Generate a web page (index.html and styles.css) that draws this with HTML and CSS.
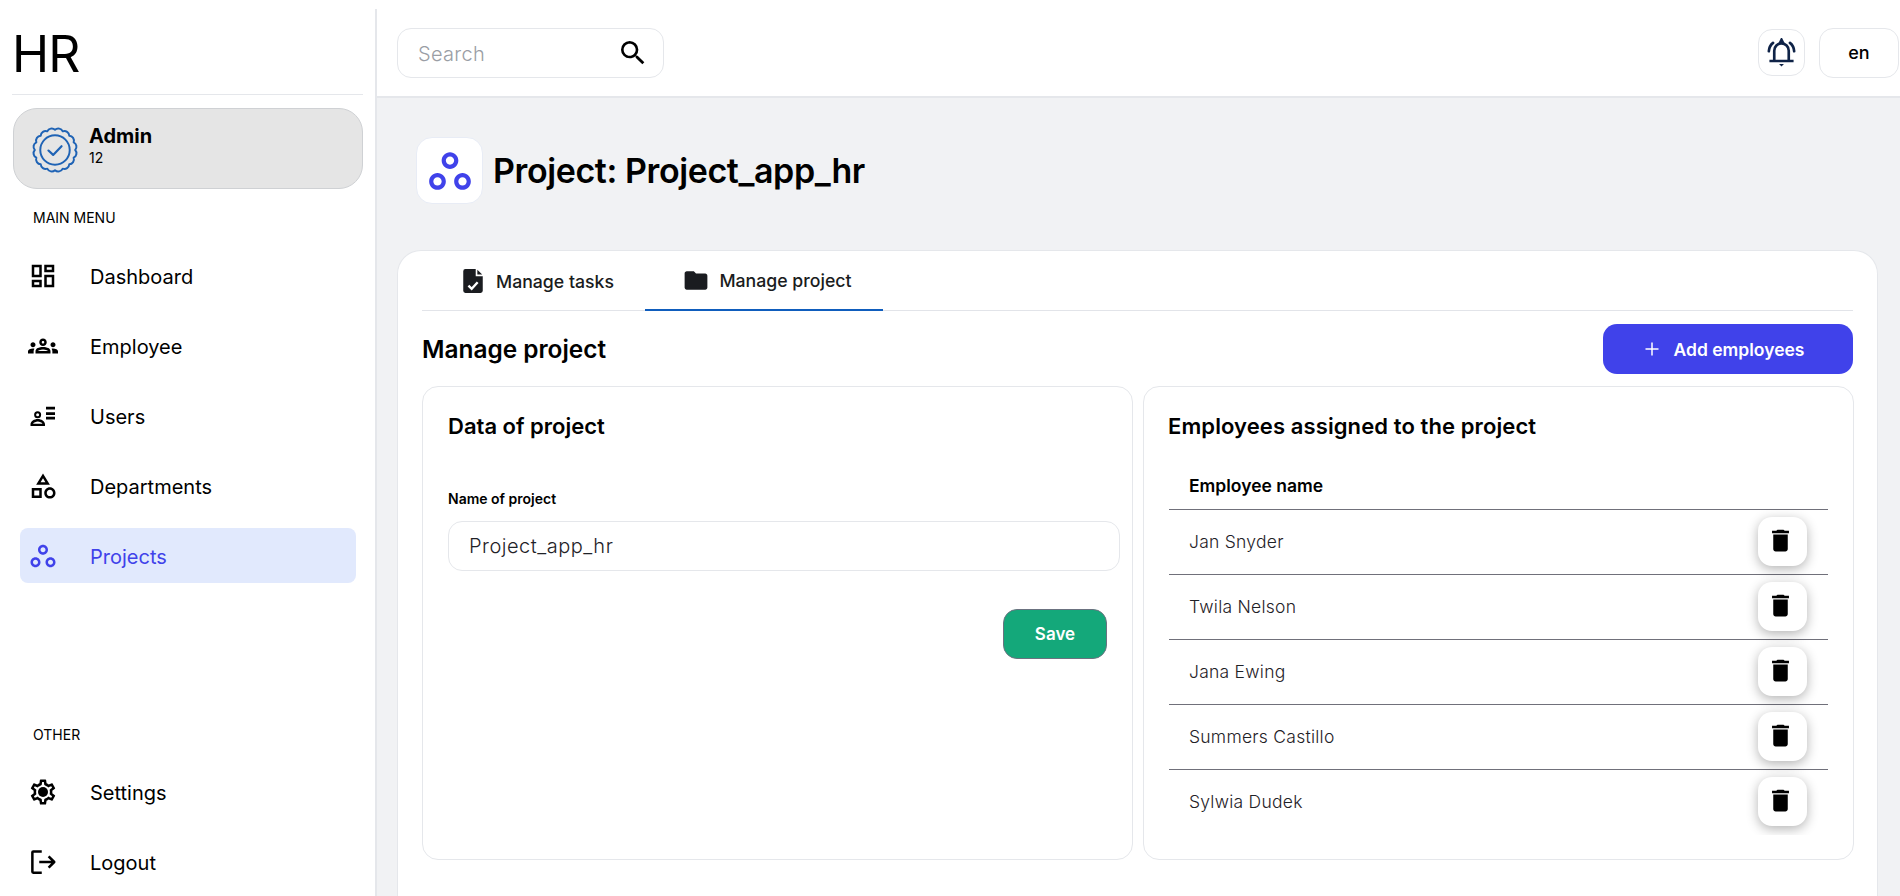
FILE: index.html
```html
<!DOCTYPE html>
<html lang="en">
<head>
<meta charset="utf-8">
<title>HR</title>
<link rel="stylesheet" href="styles.css">
</head>
<body>
<div class="app">
  <aside class="sidebar">
    <div class="brand">HR</div>
    <div class="profile">
      <svg class="badge" viewBox="0 0 44 44" fill="none" stroke="#1f63b5" stroke-width="1.8" stroke-linecap="round" stroke-linejoin="round">
        <path d="M40.5 22A4.5 4.5 0 0 1 39.1 29.08A4.5 4.5 0 0 1 35.08 35.08A4.5 4.5 0 0 1 29.08 39.1A4.5 4.5 0 0 1 22 40.5A4.5 4.5 0 0 1 14.92 39.1A4.5 4.5 0 0 1 8.92 35.08A4.5 4.5 0 0 1 4.9 29.08A4.5 4.5 0 0 1 3.5 22A4.5 4.5 0 0 1 4.9 14.92A4.5 4.5 0 0 1 8.92 8.92A4.5 4.5 0 0 1 14.92 4.9A4.5 4.5 0 0 1 22 3.5A4.5 4.5 0 0 1 29.08 4.9A4.5 4.5 0 0 1 35.08 8.92A4.5 4.5 0 0 1 39.1 14.92A4.5 4.5 0 0 1 40.5 22Z"/>
        <circle cx="22" cy="22" r="13.5"/>
        <path d="M16 22.5l4.3 4 7.7-8" stroke-width="2"/>
      </svg>
      <div class="profile-text">
        <div class="profile-name">Admin</div>
        <div class="profile-id">12</div>
      </div>
    </div>
    <div class="menu-label">MAIN MENU</div>
    <nav class="menu">
      <a class="menu-item">
        <svg class="menu-icon" viewBox="0 0 24 24"><path d="M19 5v2h-4V5h4M9 5v6H5V5h4m10 8v6h-4v-6h4M9 17v2H5v-2h4M21 3h-8v6h8V3zM11 3H3v10h8V3zm10 8h-8v10h8V11zm-10 4H3v6h8v-6z"/></svg>
        <span>Dashboard</span>
      </a>
      <a class="menu-item">
        <svg class="menu-icon" viewBox="0 0 24 24"><path d="M4 13c1.1 0 2-.9 2-2s-.9-2-2-2-2 .9-2 2 .9 2 2 2zm1.13 1.1C4.76 14.04 4.39 14 4 14c-.99 0-1.93.21-2.78.58C.48 14.9 0 15.62 0 16.43V18h4.5v-1.61c0-.83.23-1.61.63-2.29zM20 13c1.1 0 2-.9 2-2s-.9-2-2-2-2 .9-2 2 .9 2 2 2zm4 3.43c0-.81-.48-1.53-1.22-1.85C21.93 14.21 20.99 14 20 14c-.39 0-.76.04-1.13.1.4.68.63 1.46.63 2.29V18H24v-1.57zm-7.76-2.78c-1.17-.52-2.61-.9-4.24-.9s-3.07.39-4.24.9C6.68 14.13 6 15.21 6 16.39V18h12v-1.61c0-1.18-.68-2.26-1.76-2.74zM8.07 16c.09-.23.13-.39.91-.69.97-.38 1.99-.56 3.02-.56s2.05.18 3.02.56c.77.3.81.46.91.69H8.07zM12 8c.55 0 1 .45 1 1s-.45 1-1 1-1-.45-1-1 .45-1 1-1m0-2c-1.66 0-3 1.34-3 3s1.34 3 3 3 3-1.34 3-3-1.34-3-3-3z"/></svg>
        <span>Employee</span>
      </a>
      <a class="menu-item">
        <svg class="menu-icon" viewBox="0 0 24 24"><path d="M14.400 4.500h7.200v2.200h-7.200zM14.400 8.900h7.200v2.200h-7.200zM14.400 12.500h7.200v2.200h-7.200z"/><path fill-rule="evenodd" d="M7.700 8.200a2.800 2.800 0 1 0 0 5.600 2.800 2.800 0 0 0 0-5.600zm0 1.600a1.200 1.200 0 1 1 0 2.400 1.200 1.200 0 0 1 0-2.400zM2 20v-1.400c0-2.400 3-4.200 5.800-4.200s5.800 1.800 5.800 4.200V20zm2-1.800h7.600c-.6-1-2.400-1.800-3.800-1.800s-3.200.8-3.800 1.800z"/></svg>
        <span>Users</span>
      </a>
      <a class="menu-item">
        <svg class="menu-icon" viewBox="0 0 24 24"><path d="M12 2l-5.500 9h11L12 2zm0 3.840L13.930 9h-3.870L12 5.840zM17.500 13c-2.490 0-4.500 2.010-4.500 4.500s2.010 4.500 4.500 4.500 4.500-2.010 4.500-4.500-2.010-4.500-4.500-4.500zm0 7c-1.380 0-2.500-1.120-2.500-2.500s1.120-2.500 2.500-2.500 2.500 1.120 2.500 2.500-1.120 2.500-2.500 2.500zM3 21.500h8v-8H3v8zm2-6h4v4H5v-4z"/></svg>
        <span>Departments</span>
      </a>
      <a class="menu-item active">
        <svg class="menu-icon" viewBox="0 0 24 24"><path d="M6 13c-2.200 0-4 1.800-4 4s1.800 4 4 4 4-1.800 4-4-1.800-4-4-4zm0 6c-1.100 0-2-.9-2-2s.9-2 2-2 2 .9 2 2-.9 2-2 2zm6-16C9.800 3 8 4.800 8 7s1.800 4 4 4 4-1.800 4-4-1.800-4-4-4zm0 6c-1.100 0-2-.9-2-2s.9-2 2-2 2 .9 2 2-.9 2-2 2zm6 4c-2.200 0-4 1.800-4 4s1.800 4 4 4 4-1.800 4-4-1.800-4-4-4zm0 6c-1.100 0-2-.9-2-2s.9-2 2-2 2 .9 2 2-.9 2-2 2z"/></svg>
        <span>Projects</span>
      </a>
    </nav>
    <div class="menu-bottom">
      <div class="menu-label">OTHER</div>
      <nav class="menu">
        <a class="menu-item">
          <svg class="menu-icon" viewBox="0 0 24 24"><path d="M19.430 12.980c.04-.32.07-.64.07-.98s-.03-.66-.07-.98l2.110-1.650c.19-.15.24-.42.12-.64l-2-3.460c-.09-.16-.26-.25-.44-.25-.06 0-.12.01-.17.03l-2.490 1c-.52-.4-1.080-.73-1.690-.98l-.38-2.650C14.460 2.180 14.250 2 14 2h-4c-.25 0-.46.18-.49.42l-.38 2.650c-.61.25-1.170.59-1.690.98l-2.490-1c-.06-.02-.12-.03-.18-.03-.17 0-.34.09-.43.25l-2 3.460c-.13.22-.07.49.12.64l2.110 1.650c-.04.32-.07.65-.07.98s.03.66.07.98l-2.110 1.650c-.19.15-.24.42-.12.64l2 3.460c.09.16.26.25.44.25.06 0 .12-.01.17-.03l2.490-1c.52.4 1.080.73 1.690.98l.38 2.650c.03.24.24.42.49.42h4c.25 0 .46-.18.49-.42l.38-2.650c.61-.25 1.170-.59 1.690-.98l2.490 1c.06.02.12.03.18.03.17 0 .34-.09.43-.25l2-3.460c.12-.22.07-.49-.12-.64l-2.110-1.650zm-1.980-1.710c.04.31.05.52.05.73s-.02.43-.05.73l-.14 1.130.89.7 1.080.84-.7 1.210-1.270-.51-1.040-.42-.9.68c-.43.32-.84.56-1.250.73l-1.060.43-.16 1.130-.2 1.350h-1.400l-.19-1.350-.16-1.130-1.060-.43c-.43-.18-.83-.41-1.230-.71l-.91-.7-1.060.43-1.270.51-.7-1.210 1.080-.84.89-.7-.14-1.130c-.03-.31-.05-.54-.05-.74s.02-.43.05-.73l.14-1.130-.89-.7-1.080-.84.7-1.210 1.270.51 1.040.42.9-.68c.43-.32.84-.56 1.250-.73l1.060-.43.16-1.130.2-1.350h1.390l.19 1.350.16 1.130 1.060.43c.43.18.83.41 1.230.71l.91.7 1.060-.43 1.270-.51.7 1.210-1.070.85-.89.7.14 1.130z"/><circle cx="12" cy="12" r="4"/></svg>
          <span>Settings</span>
        </a>
        <a class="menu-item">
          <svg class="menu-icon" viewBox="0 0 24 24"><path d="M11 3.500H4.200a.7.7 0 0 0-.7.7v15.600a.7.7 0 0 0 .7.7H11M9 12h12M16.500 7.500L21 12l-4.500 4.500" fill="none" stroke="#000" stroke-width="2" stroke-linejoin="round"/></svg>
          <span>Logout</span>
        </a>
      </nav>
    </div>
  </aside>

  <main class="main">
    <header class="topbar">
      <div class="search">
        <span class="search-text">Search</span>
        <svg class="search-icon" viewBox="0 0 24 24"><path d="M15.500 14h-.79l-.28-.27A6.471 6.471 0 0 0 16 9.500 6.500 6.500 0 1 0 9.500 16c1.610 0 3.090-.59 4.230-1.570l.27.28v.79l5 4.990L20.490 19l-4.990-5zm-6 0C7.010 14 5 11.990 5 9.500S7.010 5 9.500 5 14 7.010 14 9.500 11.990 14 9.500 14z"/></svg>
      </div>
      <div class="top-actions">
        <button class="bell">
          <svg viewBox="2 2 24 24" fill="none" stroke="#0f2347" stroke-width="2.200"><path d="M8 20.500v-8a6 6 0 0 1 12 0v8M4 21h20"/><path d="M3.500 13c.2-3 1.300-5.300 3.500-7M24.500 13c-.2-3-1.300-5.300-3.500-7" stroke-linecap="round"/><path d="M12 23.500h4l-2 2z" fill="#0f2347" stroke="none"/><path d="M13 5.500l1-2 1 2z" fill="#0f2347"/></svg>
        </button>
        <button class="lang">en</button>
      </div>
    </header>

    <section class="content">
      <div class="page-head">
        <div class="page-icon">
          <svg viewBox="0 0 24 24"><path d="M6 13c-2.200 0-4 1.800-4 4s1.800 4 4 4 4-1.800 4-4-1.800-4-4-4zm0 6c-1.100 0-2-.9-2-2s.9-2 2-2 2 .9 2 2-.9 2-2 2zm6-16C9.800 3 8 4.800 8 7s1.800 4 4 4 4-1.800 4-4-1.800-4-4-4zm0 6c-1.100 0-2-.9-2-2s.9-2 2-2 2 .9 2 2-.9 2-2 2zm6 4c-2.200 0-4 1.800-4 4s1.800 4 4 4 4-1.800 4-4-1.800-4-4-4zm0 6c-1.100 0-2-.9-2-2s.9-2 2-2 2 .9 2 2-.9 2-2 2z"/></svg>
        </div>
        <h1 class="page-title">Project: Project_app_hr</h1>
      </div>

      <div class="card">
        <div class="tabs">
          <div class="tab">
            <svg class="tab-icon" viewBox="0 0 24 24"><path d="M14.500 1H5a2 2 0 0 0-2 2v18a2 2 0 0 0 2 2h14a2 2 0 0 0 2-2V7.500h-6.500zM16 1.500V6h4.500z" fill="#1a1c20"/><path d="M7.800 16.200l3 3 5.500-6" fill="none" stroke="#fff" stroke-width="2.200"/></svg>
            <span>Manage tasks</span>
          </div>
          <div class="tab tab-active">
            <svg class="tab-icon" viewBox="0 0 24 24"><path d="M10 4H3.500C2.400 4 1.500 4.900 1.500 6v13c0 1.100.9 2 2 2h17c1.100 0 2-.9 2-2V8c0-1.100-.9-2-2-2H12z" fill="#1a1c20"/></svg>
            <span>Manage project</span>
          </div>
        </div>

        <div class="section-head">
          <h2 class="section-title">Manage project</h2>
          <button class="btn-add">
            <svg viewBox="0 0 16 16" fill="none" stroke="#fff" stroke-width="1.500"><path d="M8 1.500v13M1.500 8h13"/></svg>
            <span>Add employees</span>
          </button>
        </div>

        <div class="panels">
          <div class="panel panel-form">
            <h3 class="panel-title">Data of project</h3>
            <label class="field-label" for="pname">Name of project</label>
            <input class="field-input" id="pname" value="Project_app_hr">
            <div class="form-actions">
              <button class="btn-save">Save</button>
            </div>
          </div>

          <div class="panel panel-table">
            <h3 class="panel-title">Employees assigned to the project</h3>
            <div class="table-wrap">
              <table class="table">
                <thead>
                  <tr><th>Employee name</th><th></th></tr>
                </thead>
                <tbody>
                  <tr><td>Jan Snyder</td><td class="cell-action"><button class="btn-del"><svg viewBox="0 0 24 24"><path d="M6 19c0 1.100.9 2 2 2h8c1.100 0 2-.9 2-2V7H6zM19 4h-3.500l-1-1h-5l-1 1H5v2h14z"/></svg></button></td></tr>
                  <tr><td>Twila Nelson</td><td class="cell-action"><button class="btn-del"><svg viewBox="0 0 24 24"><path d="M6 19c0 1.100.9 2 2 2h8c1.100 0 2-.9 2-2V7H6zM19 4h-3.500l-1-1h-5l-1 1H5v2h14z"/></svg></button></td></tr>
                  <tr><td>Jana Ewing</td><td class="cell-action"><button class="btn-del"><svg viewBox="0 0 24 24"><path d="M6 19c0 1.100.9 2 2 2h8c1.100 0 2-.9 2-2V7H6zM19 4h-3.500l-1-1h-5l-1 1H5v2h14z"/></svg></button></td></tr>
                  <tr><td>Summers Castillo</td><td class="cell-action"><button class="btn-del"><svg viewBox="0 0 24 24"><path d="M6 19c0 1.100.9 2 2 2h8c1.100 0 2-.9 2-2V7H6zM19 4h-3.500l-1-1h-5l-1 1H5v2h14z"/></svg></button></td></tr>
                  <tr><td>Sylwia Dudek</td><td class="cell-action"><button class="btn-del"><svg viewBox="0 0 24 24"><path d="M6 19c0 1.100.9 2 2 2h8c1.100 0 2-.9 2-2V7H6zM19 4h-3.500l-1-1h-5l-1 1H5v2h14z"/></svg></button></td></tr>
                </tbody>
              </table>
            </div>
          </div>
        </div>
      </div>
    </section>
  </main>
</div>
</body>
</html>
```

FILE: styles.css
```css
* { box-sizing: border-box; }
html, body { margin: 0; height: 100%; overflow: hidden; }
body { font-family: "Inter", "Liberation Sans", sans-serif; color: #000; background: #fff; }
h1, h2, h3 { margin: 0; }
button { font-family: inherit; cursor: pointer; }

.app { display: flex; height: 896px; }

/* Sidebar */
.sidebar { width: 377px; flex: none; margin-top: 9px; border-right: 2px solid #e5e7eb; padding: 0 12px 0 13px; display: flex; flex-direction: column; }
.brand { font-size: 50px; font-weight: 400; line-height: 60px; height: 86px; padding-top: 15px; border-bottom: 1px solid #e5e7eb; letter-spacing: -.8px; margin-left: -1px; padding-left: 0; }
.profile { margin-top: 13px; height: 81px; flex: none; border: 1px solid #cfd1d4; border-radius: 24px; background: #e5e5e5; display: flex; align-items: center; gap: 10px; padding-left: 17px; }
.badge { width: 48px; height: 48px; flex: none; margin-top: 2px; }
.profile-text { margin-top: -6px; }
.profile-name { font-size: 20px; font-weight: 700; line-height: 24px; }
.profile-id { font-size: 14px; line-height: 20px; }
.menu-label { font-size: 14px; line-height: 20px; padding-left: 20px; margin-top: 19px; }
.menu { display: flex; flex-direction: column; margin-top: 20px; }
.menu-item { height: 55px; margin: 0 7px 15px 7px; display: flex; align-items: center; gap: 32px; padding-left: 8px; font-size: 20px; border-radius: 8px; }
.menu-item span { padding-top: 2px; }
.menu-item.active { background: #e1e9fd; color: #4042ea; }
.menu-item.active .menu-icon { fill: #4042ea; }
.menu-icon { width: 30px; height: 30px; flex: none; fill: #000; }
.menu-bottom { margin-top: auto; }
.menu-bottom .menu-label { margin-top: 0; }
.menu-bottom .menu { margin-top: 19px; }
.menu-bottom .menu-item { margin-bottom: 15px; }
.menu-bottom .menu-item:last-child { margin-bottom: 7px; }

/* Main */
.main { flex: 1; min-width: 0; display: flex; flex-direction: column; background: #f1f2f4; }
.topbar { height: 98px; flex: none; background: #fff; border-bottom: 2px solid #e5e7eb; display: flex; align-items: center; justify-content: space-between; padding: 10px 1px 1px 20px; }
.search { width: 267px; height: 50px; border: 1px solid #e5e7eb; border-radius: 14px; display: flex; align-items: center; justify-content: space-between; padding: 0 14px 0 20px; background: #fff; }
.search-text { font-size: 20px; font-weight: 300; color: #9a9ea5; letter-spacing: .3px; padding-top: 2px; }
.search-icon { width: 32px; height: 32px; fill: #000; }
.top-actions { display: flex; align-items: center; gap: 14px; }
.bell { width: 47px; height: 47px; padding: 8px; border: 1px solid #e5e7eb; border-radius: 14px; background: #fff; display: flex; }
.bell svg { width: 29px; height: 29px; }
.lang { width: 80px; height: 50px; border: 1px solid #e5e7eb; border-radius: 14px; background: #fff; font-size: 18px; font-weight: 500; color: #000; }

.content { flex: 1; min-height: 0; padding: 39px 22px 0 20px; display: flex; flex-direction: column; }
.page-head { display: flex; align-items: center; gap: 10px; padding-left: 19px; height: 67px; flex: none; }
.page-icon { width: 67px; height: 67px; border-radius: 16px; background: #fff; border: 1px solid #e8ecf5; display: flex; align-items: center; justify-content: center; }
.page-icon svg { width: 50px; height: 50px; fill: #4042ea; }
.page-title { font-size: 34px; font-weight: 600; letter-spacing: -.4px; line-height: 40px; padding-top: 1px; }

.card { margin-top: 46px; flex: 1; min-height: 0; background: #fff; border: 1px solid #e5e7eb; border-bottom: 0; border-radius: 24px 24px 0 0; padding: 0 24px; }
.tabs { display: flex; height: 60px; border-bottom: 1px solid #e2e4e9; }
.tab { display: flex; align-items: center; gap: 10px; justify-content: center; height: 60px; font-size: 17.7px; font-weight: 500; color: #1a1c20; padding-left: 7px; }
.tab:first-child { width: 223px; }
.tab-active { width: 238px; border-bottom: 2px solid #0f5dbd; }
.tab-icon { width: 26px; height: 26px; flex: none; }

.section-head { display: flex; align-items: center; justify-content: space-between; margin-top: 13px; }
.section-title { font-size: 24.4px; font-weight: 600; line-height: 50px; }
.btn-add { width: 250px; height: 50px; border: 0; padding: 0 8px 0 0; border-radius: 14px; background: #4042ea; color: #fff; font-size: 17.5px; font-weight: 600; display: flex; align-items: center; justify-content: center; gap: 14px; }
.btn-add svg { width: 16px; height: 16px; }

.panels { display: grid; grid-template-columns: 711px 711px; gap: 10px; margin-top: 12px; }
.panel { height: 474px; border: 1px solid #e5e7eb; border-radius: 16px; padding: 24px 25px 0; }
.panel-title { font-size: 22px; font-weight: 600; line-height: 30px; }
.panel-form { display: flex; flex-direction: column; }
.field-label { display: block; font-size: 14px; font-weight: 600; line-height: 20px; margin-top: 48px; }
.field-input { width: 672px; height: 50px; margin-top: 12px; border: 1px solid #e5e7eb; border-radius: 14px; padding: 0 20px; font: 300 20px "Inter", "Liberation Sans", sans-serif; letter-spacing: .5px; color: #1f2227; flex: none; outline: none; }
.form-actions { display: flex; justify-content: flex-end; margin-top: 38px; width: 659px; }
.btn-save { width: 104px; height: 50px; border: 1px solid #6b7280; border-radius: 14px; background: #14a87a; color: #fff; font-size: 17px; font-weight: 600; }

.panel-table .panel-title { margin-left: -1px; letter-spacing: .1px; }
.table-wrap { height: 373px; margin-top: 21px; overflow: hidden; }
.table { width: 100%; border-collapse: collapse; }
.table th { height: 47px; text-align: left; font-size: 17.5px; font-weight: 600; padding: 0 0 0 20px; border-bottom: 1px solid #70707a; }
.table td { height: 65px; font-size: 17.5px; font-weight: 300; color: #1f2227; padding: 0 0 0 20px; border-bottom: 1px solid #70707a; letter-spacing: .25px; }
.table tbody tr:last-child td { border-bottom: 0; }
.cell-action { text-align: right; padding-right: 21px !important; width: 90px; }
.btn-del { width: 49px; height: 49px; padding: 0; border: 0; border-radius: 14px; background: #fff; box-shadow: 0 3px 12px rgba(0,0,0,.3); display: inline-flex; align-items: center; justify-content: center; vertical-align: middle; }
.btn-del svg { width: 29px; height: 29px; fill: #000; margin-left: -4px; margin-top: -3px; }
```
